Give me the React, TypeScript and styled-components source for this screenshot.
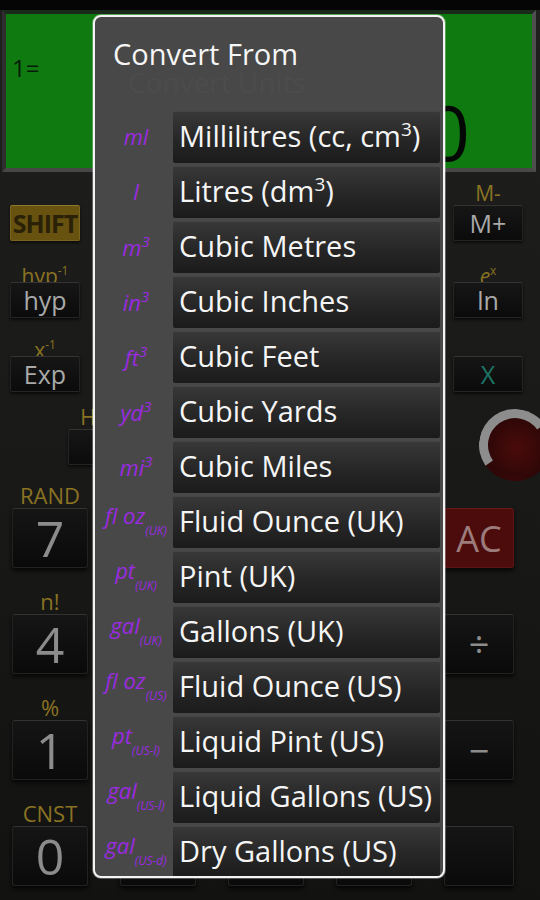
import React from "react";
import styled, { createGlobalStyle } from "styled-components";

const GlobalStyle = createGlobalStyle`
  html, body {
    margin: 0;
    padding: 0;
    background: #111;
  }
  body {
    font-family: "Open Sans", "DejaVu Sans", sans-serif;
  }
`;

type Unit = {
  sym: React.ReactNode;
  name: React.ReactNode;
};

// built at render time so the styled parts below exist already
const getUnits = (): Unit[] => [
  { sym: "ml", name: <>Millilitres (cc, cm<Sup>3</Sup>)</> },
  { sym: "l", name: <>Litres (dm<Sup>3</Sup>)</> },
  { sym: <>m<SymSup>3</SymSup></>, name: "Cubic Metres" },
  { sym: <>in<SymSup>3</SymSup></>, name: "Cubic Inches" },
  { sym: <>ft<SymSup>3</SymSup></>, name: "Cubic Feet" },
  { sym: <>yd<SymSup>3</SymSup></>, name: "Cubic Yards" },
  { sym: <>mi<SymSup>3</SymSup></>, name: "Cubic Miles" },
  { sym: <>fl oz<SymSub>(UK)</SymSub></>, name: "Fluid Ounce (UK)" },
  { sym: <>pt<SymSub>(UK)</SymSub></>, name: "Pint (UK)" },
  { sym: <>gal<SymSub>(UK)</SymSub></>, name: "Gallons (UK)" },
  { sym: <>fl oz<SymSub>(US)</SymSub></>, name: "Fluid Ounce (US)" },
  { sym: <>pt<SymSub>(US-l)</SymSub></>, name: "Liquid Pint (US)" },
  { sym: <>gal<SymSub>(US-l)</SymSub></>, name: "Liquid Gallons (US)" },
  { sym: <>gal<SymSub>(US-d)</SymSub></>, name: "Dry Gallons (US)" },
];

const digitRows = [
  { label: "RAND", keys: ["7", "8", "9", "DEL", "AC"] },
  { label: "n!", keys: ["4", "5", "6", "×", "÷"] },
  { label: "%", keys: ["1", "2", "3", "+", "−"] },
  { label: "CNST", keys: ["0", ".", "EXP", "Ans", ""] },
];

const App = () => {
  const units = getUnits();
  return (
    <>
      <GlobalStyle />
      <Screen>
        <StatusStrip />
        <Display>
          <DisplayLine>1=</DisplayLine>
          <BigDigit>0</BigDigit>
        </Display>

        <Keypad>
          <FnRow $top={10}>
            <Cell>
              <KeyLabel />
              <FnKey $tone="shift">SHIFT</FnKey>
            </Cell>
            <Cell>
              <KeyLabel>M-</KeyLabel>
              <FnKey>M+</FnKey>
            </Cell>
          </FnRow>
          <FnRow $top={18}>
            <Cell>
              <KeyLabel>
                hyp<LabelSup>-1</LabelSup>
              </KeyLabel>
              <FnKey>hyp</FnKey>
            </Cell>
            <Cell>
              <KeyLabel>
                <i>e</i>
                <LabelSup>x</LabelSup>
              </KeyLabel>
              <FnKey>ln</FnKey>
            </Cell>
          </FnRow>
          <FnRow $top={15}>
            <Cell>
              <KeyLabel>
                x<LabelSup>-1</LabelSup>
              </KeyLabel>
              <FnKey>Exp</FnKey>
            </Cell>
            <Cell>
              <KeyLabel />
              <FnKey $tone="teal">X</FnKey>
            </Cell>
          </FnRow>
          <FnRow $top={14}>
            <ShiftedCell>
              <KeyLabel>H</KeyLabel>
              <FnKey />
            </ShiftedCell>
            <Dial />
          </FnRow>

          {digitRows.map((row, i) => (
            <DigitRow key={row.label} $top={i === 0 ? 1 : 20}>
              {row.keys.map((k, j) => (
                <DigitCell key={j}>
                  <DigitLabel>{j === 0 ? row.label : ""}</DigitLabel>
                  <DigitKey $danger={k === "AC"} $small={j === 4}>
                    {k}
                  </DigitKey>
                </DigitCell>
              ))}
            </DigitRow>
          ))}
        </Keypad>

        <Dialog>
          <TitleBlock>
            <Title>Convert From</Title>
            <GhostTitle>Convert Units</GhostTitle>
          </TitleBlock>
          <UnitList>
            {units.map((u, i) => (
              <UnitRow key={i}>
                <Symbol>
                  <span>{u.sym}</span>
                </Symbol>
                <UnitButton>
                  <span>{u.name}</span>
                </UnitButton>
              </UnitRow>
            ))}
          </UnitList>
        </Dialog>
      </Screen>
    </>
  );
};

export default App;

const Screen = styled.div`
  position: relative;
  width: 540px;
  height: 900px;
  overflow: hidden;
  background: linear-gradient(#1f1f1e, #181817 60%, #121211);
`;

const StatusStrip = styled.div`
  height: 10px;
  background: #050505;
`;

const Display = styled.div`
  height: 162px;
  margin: 0 4px 0 2px;
  border: 4px solid;
  border-color: #1a2a1a #4e4e4e #484848 #2e2e2e;
  background: #0f7a10;
  display: flex;
  flex-direction: column;
  padding: 40px 62px 4px 6px;
  box-sizing: border-box;
`;

const DisplayLine = styled.div`
  font-size: 24px;
  line-height: 28px;
  color: #071a07;
`;

const BigDigit = styled.div`
  margin-top: auto;
  align-self: flex-end;
  font-size: 76px;
  line-height: 64px;
  color: #040804;
`;

const Keypad = styled.div`
  display: flex;
  flex-direction: column;
`;

const FnRow = styled.div<{ $top: number }>`
  display: flex;
  justify-content: space-between;
  align-items: flex-start;
  margin-top: ${(p) => p.$top}px;
  padding: 0 17px 0 10px;
`;

const Cell = styled.div`
  width: 70px;
  display: flex;
  flex-direction: column;
  align-items: center;
`;

const ShiftedCell = styled(Cell)`
  margin-left: 58px;
  width: 40px;
`;

const KeyLabel = styled.div`
  height: 23px;
  font-size: 21px;
  line-height: 23px;
  color: #8a7322;
  white-space: nowrap;
`;

const LabelSup = styled.span`
  font-size: 12px;
  vertical-align: 9px;
`;

const FnKey = styled.div<{ $tone?: "shift" | "teal" }>`
  width: 100%;
  height: 36px;
  box-sizing: border-box;
  display: flex;
  align-items: center;
  justify-content: center;
  font-size: 25px;
  border-radius: 2px;
  border: 1px solid ${(p) => (p.$tone === "shift" ? "#7a6520" : "#242424")};
  border-top-color: ${(p) => (p.$tone === "shift" ? "#8f7a2c" : "#343434")};
  background: ${(p) =>
    p.$tone === "shift" ? "#67520f" : "linear-gradient(#161616, #0b0b0b)"};
  color: ${(p) =>
    p.$tone === "shift" ? "#2a2108" : p.$tone === "teal" ? "#1d7566" : "#a9a9a9"};
  font-weight: ${(p) => (p.$tone === "shift" ? 700 : 400)};
  letter-spacing: ${(p) => (p.$tone === "shift" ? "-1px" : "0")};
  box-shadow: 0 2px 3px rgba(0, 0, 0, 0.6);
`;

const Dial = styled.div`
  width: 72px;
  height: 72px;
  margin: 3px -28px 0 0;
  border-radius: 50%;
  box-sizing: border-box;
  border: 9px solid;
  border-color: #8d8d8d transparent transparent #8d8d8d;
  transform: rotate(10deg);
  background: radial-gradient(circle at 55% 55%, #4a0b0b, #300707 70%);
`;

const DigitRow = styled.div<{ $top: number }>`
  display: flex;
  justify-content: space-between;
  margin-top: ${(p) => p.$top}px;
  padding: 0 20px 0 12px;
`;

const DigitCell = styled.div`
  width: 76px;
  display: flex;
  flex-direction: column;
  align-items: center;
`;

const DigitLabel = styled.div`
  height: 26px;
  font-size: 22px;
  line-height: 26px;
  color: #8a7322;
`;

const DigitKey = styled.div<{ $danger?: boolean; $small?: boolean }>`
  width: ${(p) => (p.$small ? "70px" : "76px")};
  align-self: ${(p) => (p.$small ? "flex-start" : "center")};
  height: 60px;
  box-sizing: border-box;
  display: flex;
  align-items: center;
  justify-content: center;
  border-radius: 3px;
  border: 1px solid ${(p) => (p.$danger ? "#5c1414" : "#222")};
  border-top-color: ${(p) => (p.$danger ? "#6a1a1a" : "#333")};
  background: ${(p) =>
    p.$danger ? "#4d0c0c" : "linear-gradient(#151515, #0a0a0a)"};
  color: ${(p) => (p.$danger ? "#9c7c7c" : "#8c8c8c")};
  font-size: ${(p) => (p.$small ? "36px" : "50px")};
  box-shadow: 0 3px 4px rgba(0, 0, 0, 0.7);
`;

const Dialog = styled.div`
  position: absolute;
  top: 15px;
  left: 93px;
  width: 352px;
  height: 863px;
  box-sizing: border-box;
  border: 2px solid #f4f4f4;
  border-radius: 8px;
  box-shadow: 0 0 0 1px rgba(255, 255, 255, 0.3);
  background: #484848;
  overflow: hidden;
  display: flex;
  flex-direction: column;
`;

const TitleBlock = styled.div`
  height: 91px;
  flex-shrink: 0;
  padding: 20px 0 0 18px;
  box-sizing: border-box;
`;

const Title = styled.div`
  font-size: 29px;
  font-weight: 500;
  line-height: 34px;
  color: #f6f6f6;
`;

const GhostTitle = styled.div`
  margin: -6px 0 0 15px;
  font-size: 28px;
  line-height: 34px;
  color: #4c4c4c;
`;

const UnitList = styled.div`
  display: flex;
  flex-direction: column;
`;

const UnitRow = styled.div`
  display: grid;
  grid-template-columns: 78px 1fr;
  height: 55px;
  flex-shrink: 0;
`;

const Symbol = styled.div`
  display: flex;
  align-items: center;
  justify-content: center;
  padding-left: 4px;
  font-size: 22px;
  font-style: italic;
  font-weight: 500;
  color: #9b2be0;
  white-space: nowrap;
  line-height: 1;
`;

const SymSup = styled.span`
  font-size: 15px;
  vertical-align: 9px;
`;

const SymSub = styled.span`
  font-size: 12px;
  vertical-align: -11px;
`;

const UnitButton = styled.div`
  margin: 3px 3px 0 0;
  height: 52px;
  box-sizing: border-box;
  display: flex;
  align-items: center;
  padding: 0 0 5px 6px;
  border-radius: 2px;
  border-top: 1px solid #454545;
  background: linear-gradient(#383838, #262626 55%, #1b1b1b);
  font-size: 29px;
  font-weight: 500;
  color: #f5f5f5;
  white-space: nowrap;
`;

const Sup = styled.span`
  font-size: 19px;
  vertical-align: 11px;
  line-height: 0;
`;
